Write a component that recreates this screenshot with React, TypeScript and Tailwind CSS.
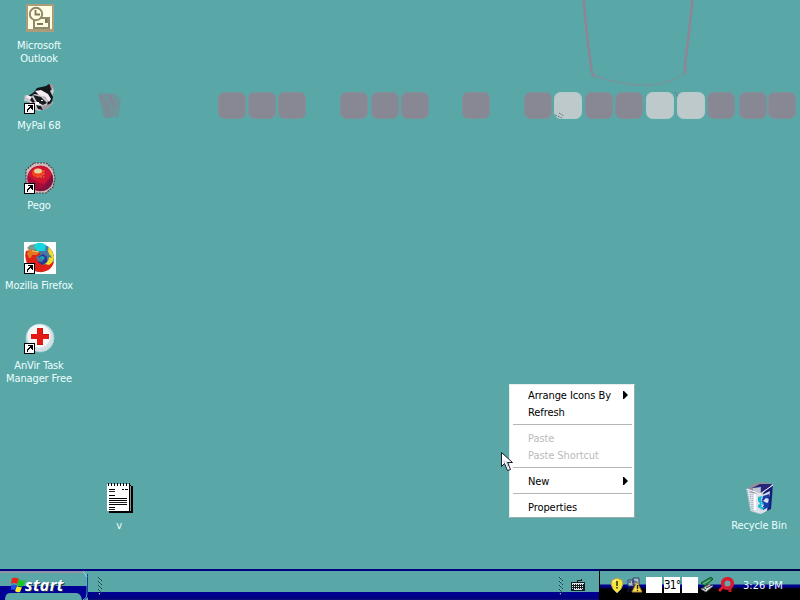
import React from 'react';

const label = 'font-["DejaVu_Sans_Condensed","DejaVu_Sans",sans-serif] font-[stretch:condensed]';

function Shortcut() {
  return (
    <g shapeRendering="crispEdges">
      <path fill="#fff" stroke="#000" d="M.5 21.5h10v10H.5z" />
      <path fill="#000" d="M4 23h5v5H8v-1H7v-1H6v1H5v1H4v2H3v-3h1v-1h1v-1h1v-1H4z" />
    </g>
  );
}

function Outlook() {
  return (
    <svg width="32" height="32" viewBox="0 2 32 32">
      <path fill="#a69d7b" d="M2 4h28v28H2z" />
      <path d="M2.5 4.5h27v27h-27z" fill="none" stroke="#c09a78" strokeDasharray="1 1" />
      <path fill="#fffde3" d="M4 6h24v23H4z" />
      <path d="M10 18h15v10H10z" fill="#fffde3" stroke="#918868" strokeWidth="2" />
      <circle cx="12" cy="14" r="6.2" fill="#fffde3" stroke="#918868" strokeWidth="2" />
      <path d="M11.5 10v4.5H16M13 24h6M21 20h2v2h-2" fill="none" stroke="#817757" strokeWidth="1.8" />
    </svg>
  );
}

function Raccoon() {
  return (
    <svg width="32" height="32" viewBox="0 0 32 32">
      <path fill="#c8c4c8" d="M1 13l7 2 3-7 12-3 2-3 3 1 2 6-2 5 1 7-5 5-9 3-6-2-4-7-5-1z" />
      <path fill="#11171b" d="M9 11l4-5 9-2 3-2 3 2v3l-2 2 3 6-1 6-5 3 1-6-6-5-8-1-4 4-2-2z" />
      <path fill="#f4ecf0" d="M11 9l6-1 7 4 3 5-2 3-4-5-6-2zM3 13l6 2 2 5 6 2-2 4-6-3-2-5-5-3z" />
      <path fill="#171b20" d="M9 13l8 2 6 6-4 2-6-3zM8 15l3 5-2 1-3-3zM12 23l5 1 2 4-5-1z" />
      <path fill="#c88898" d="M26 3l2-1 1 4-2 1z" />
      <path fill="#a098a0" d="M18 24l8-2 3-4-3 7-7 3z" />
      <path fill="#fff" d="M17 18h2v1h-2zM12 20h3v2h-3z" />
      <Shortcut />
    </svg>
  );
}

function Pego() {
  return (
    <svg width="32" height="32" viewBox="0 0 32 32">
      <path d="M10 1h12l7 6 2 9-2 9-7 6H9L2 24V8z" fill="#cfbdba" stroke="#54404c" strokeWidth="1.2" strokeDasharray="2 1" />
      <circle cx="16" cy="16.5" r="12.8" fill="#a80e3c" />
      <path fill="#cf1733" d="M4 13q5-11 16-9 7 2 7 10l-7 8q-9-1-16-9" />
      <path fill="#80133e" d="M28 12q4 9-4 15-6 4-13 0 11 1 17-15" />
      <ellipse cx="14" cy="11" rx="6" ry="4.5" fill="#f0451f" />
      <ellipse cx="14" cy="9" rx="4" ry="2.5" fill="#e8d49a" />
      <path d="M20 8v7h-7" fill="none" stroke="#d87645" strokeDasharray="2 1" />
      <Shortcut />
    </svg>
  );
}

function Firefox() {
  return (
    <svg width="32" height="32" viewBox="0 0 32 32">
      <path fill="#fff" d="M0 0h32v32H0z" />
      <circle cx="16" cy="16" r="14" fill="#4877a1" />
      <path fill="#7d9688" d="M3 6l3-3 5-1 1 5-4 3z" />
      <path fill="#13d7e0" d="M11 2q6-3 11 1l-1 6-8 0-3-4z" />
      <path fill="#df2118" d="M2 9l4-1 4 1 6 2 0 2-4 2 2 5 6 3 6-3 4 0q-2 7-8 9-8 3-14-2Q-1 18 2 9" />
      <path fill="#df7a22" d="M5 7l7 2 3 1-2 3-5 0-1 3-2 0-2-4z" />
      <path fill="#f0df25" d="M24 5q5 3 6 11-1 5-5 7l-4-1q4-3 4-7l3 1-3-5z" />
      <path fill="#2b3592" d="M14 15l5-3 4 3v5l-5 3-5-4 5 1 2-3z" />
      <path fill="#12a8bd" d="M15 15l4-1 2 2-2 2z" />
      <path d="M8 9l7 1M24 8l2 5" stroke="#f5ca55" fill="none" />
      <Shortcut />
    </svg>
  );
}

function AnVir() {
  return (
    <svg width="32" height="32" viewBox="0 0 32 32">
      <circle cx="16" cy="16" r="14" fill="#d3dfe4" stroke="#9ad4d7" strokeDasharray="2 1" />
      <circle cx="15" cy="14" r="11.5" fill="#f5f7f7" />
      <path fill="#e51813" d="M13 6h6v6h6v5h-6v6h-6v-6H7v-5h6z" />
      <path fill="#ba1612" d="M18 6h1v6h6v1h-7zM13 22h6v1h-6z" />
      <Shortcut />
    </svg>
  );
}

function Notepad() {
  return (
    <svg width="32" height="36" viewBox="1 -1 32 36" shapeRendering="crispEdges">
      <path fill="#000" d="M4 4h24v1h2v27H6v-2H4z" />
      <path fill="#fff" d="M4 3h22v27H4z" />
      <path fill="#8b9494" d="M27 5h1v25h-1z" />
      <path d="M5 3h22" stroke="#000" strokeWidth="3" strokeDasharray="1 2" />
      <path d="M6 8.5h6M19 8.5h2M22 8.5h3M6 14.5h6M6 17.5h18M6 19.5h18M6 23.5h18M6 26.5h6" stroke="#000" />
      <path d="M6 10.5h6M6 21.5h18M6 28.5h6" stroke="#222" />
    </svg>
  );
}

function RecycleBin() {
  return (
    <svg width="32" height="32" viewBox="0 0 32 32">
      <path fill="#dfe1eb" d="M3 7l13 5 13-9-3 24-9 5-10-3z" />
      <path fill="#90909a" d="M3 7l6-5 9-2 11 2-1 3-11 7-9-1z" />
      <path fill="#26267a" d="M8 6l8-4h12l-4 5-7 4V7l-5-1z" />
      <path fill="#141e79" d="M29 3l-2 24-4 2 3-20-8 4 2-3z" />
      <path fill="#c1c6d3" d="M9 6l8-1-1 6-7-2z" />
      <path fill="#173daa" d="M19 14l6-2 0 5-3-1-3 3 4 2-2 3-4-4zM23 21l3-2-1 6-6 3v-4z" />
      <path fill="#12b8d1" d="M14 15l4-1-1 4 3 4-3 1-3-4zM14 23l4-2v4l3 0-3 3-4-3z" />
      <path d="M2.5 7l4 22 10 3 2-20z" fill="none" stroke="#c8ccda" strokeDasharray="1 1" />
      <path d="M3 7l13 5 13-9" fill="none" stroke="#f9f9fb" />
      <path d="M6 10l2 18M8 10l1 19" stroke="#a9aac0" strokeDasharray="1 1" />
      <path d="M11 12v16" stroke="#fff" strokeWidth="2" />
    </svg>
  );
}

const leftIcons = [
  { art: <Outlook />, lines: [['Microsoft', 'w-[44px]'], ['Outlook', 'w-[38px]']] },
  { art: <Raccoon />, lines: [['MyPal 68', 'w-[44px]']] },
  { art: <Pego />, lines: [['Pego', 'w-[25px]']] },
  { art: <Firefox />, lines: [['Mozilla Firefox', 'w-[69px]']] },
  { art: <AnVir />, lines: [['AnVir Task', 'w-[51px]'], ['Manager Free', 'w-[68px]']] },
];

function IconLabel({ lines }: { lines: string[][] }) {
  return (
    <div className="flex w-full flex-col items-center pr-[2px] text-[11px] leading-[13px] text-[#edffff]">
      {lines.map(([text, width]) => (
        <span key={text} className={`${width} flex justify-center whitespace-nowrap tracking-[-0.13px]`}>{text}</span>
      ))}
    </div>
  );
}

function Wallpaper() {
  const blocks = [218, 248, 278, 340, 371, 401, 462, 524, 554, 585, 615, 646, 677, 707, 739, 768];
  return (
    <svg className="absolute inset-0" width="800" height="569" viewBox="0 0 800 569">
      <path d="M583.5 0l4 39 4 31M692.5 0l-4 37-4 31" fill="none" stroke="#8c8796" strokeWidth="2.6" />
      <path d="M591 70l3 7M686 66l-2 9" stroke="#8c8796" strokeWidth="2.5" />
      <path d="M595 76q27 9 49 9 21 0 36-9" fill="none" stroke="#7e919c" strokeWidth="1.5" strokeDasharray="10 2" />
      <path d="M98 93l17 1 6 6-3 17-14 1-3-12z" fill="#7b8c94" opacity=".7" />
      <path d="M100 96l6 9 3 12M109 94l5 13" stroke="#8e8193" strokeWidth="3" fill="none" opacity=".6" />
      {blocks.map((x) => {
        const light = x === 554 || x === 646 || x === 677;
        return <rect key={x} x={x + .5} y="92.5" width="27" height="26" rx="6" fill={light ? '#bdc9cb' : '#888894'} stroke={light ? '#b4cbcb' : '#83909a'} />;
      })}
      <path d="M555 115l7 3M559 113l5 3M675 92l3 5" stroke="#5b777d" strokeDasharray="2 1" />
    </svg>
  );
}

function MenuRow({ text, muted = false, arrow = false }: { text: string; muted?: boolean; arrow?: boolean }) {
  return (
    <div className={`flex h-[17px] items-center justify-between pr-[4px] pl-[16px] ${muted ? 'text-[#bbb]' : 'text-black'}`}>
      <span>{text}</span>
      {arrow && <svg className="-mt-px" width="5" height="8" viewBox="0 0 5 8"><path d="M0 0v8h1l4-4-4-4z" /></svg>}
    </div>
  );
}

function MenuDivider() {
  return <div className="mt-[3px] mb-[5px] ml-px h-px bg-[#b5b5b5]" />;
}

function ContextMenu() {
  return (
    <div className="absolute top-[384px] left-[509px] flex h-[134px] w-[126px] flex-col border border-[#e6eeee] border-r-[#94adad] border-b-[#94adad] bg-white px-[2px] pt-[2px] text-[11px] leading-[17px] tracking-[-0.08px]">
      <MenuRow text="Arrange Icons By" arrow />
      <MenuRow text="Refresh" />
      <MenuDivider />
      <MenuRow text="Paste" muted />
      <MenuRow text="Paste Shortcut" muted />
      <MenuDivider />
      <MenuRow text="New" arrow />
      <MenuDivider />
      <MenuRow text="Properties" />
    </div>
  );
}

function Grip() {
  return (
    <svg width="8" height="20" viewBox="0 0 8 20" shapeRendering="crispEdges">
      <path d="M2 1h1v1H2zM3 2h1v1H3zM5 4h1v1H5zM2 5h1v1H2zM3 6h1v1H3zM5 8h1v1H5zM2 9h1v1H2zM3 10h1v1H3zM5 12h1v1H5zM2 13h1v1H2zM3 14h1v1H3zM5 16h1v1H5zM2 17h1v1H2z" fill="#173e43" />
      <path d="M4 3h1v1H4zM4 7h1v1H4zM4 11h1v1H4zM4 15h1v1H4zM3 18h1v1H3z" fill="#356b70" />
      <path d="M3 1h1v1H3zM3 5h1v1H3zM3 9h1v1H3zM3 13h1v1H3zM3 17h1v1H3z" fill="#8ac4c3" />
    </svg>
  );
}

function Start() {
  return (
    <div className="relative h-full w-[88px] overflow-hidden">
      <svg className="absolute inset-0" width="88" height="31" viewBox="0 0 88 31">
        <path fill="#59a7a7" d="M0 0h88v31H0z" />
        <path fill="#000080" d="M0 0h88v2H0z" />
        <path fill="#9296a4" d="M0 2h83v2H0z" />
        <path fill="#000096" d="M0 17h88v11l-4 3H0z" />
        <path fill="#59a7a7" d="M5 31q0-7 5-7h66q5 0 6 7z" />
        <path d="M83 2q4 1 4 5v18q0 4-4 6" fill="none" stroke="#69adb5" />
        <path d="M87 5h1v21h-1" fill="#08449e" />
        <path d="M83 3l2 2 2 3" fill="none" stroke="#a6d4d4" />
      </svg>
      <div className="relative flex pt-[8px] pl-[11px]">
        <svg width="15" height="16" viewBox="0 0 15 16">
          <path fill="#e62518" d="M1 1q4-1 7 1L6 7Q3 5 0 7z" />
          <path fill="#18c624" d="M8 2q3 3 7 1l-3 6q-3 2-6-1z" />
          <path fill="#2051e4" d="M0 8q3-1 6 0l-2 5q-2-1-5 0z" />
          <path fill="#ffee24" d="M6 9q3 2 5 1l-2 5q-3 1-5-1z" />
        </svg>
        <span className="-mt-[1px] -ml-px font-['Open_Sans',sans-serif] text-[16px] leading-[19px] font-bold tracking-[0.35px] text-white italic [text-shadow:1px_1px_#18354e]">start</span>
      </div>
    </div>
  );
}

function Tray() {
  return (
    <div className="flex h-full w-[201px] border-t-2 border-l border-t-[#00004c] border-l-black bg-[#59a7a7]">
      <div className="flex h-full w-full items-start bg-[linear-gradient(to_bottom,transparent_0,transparent_13px,#000096_14px,#000080_16px,#000_18px)] pt-[6px] pl-[9px]">
        <svg width="16" height="17" viewBox="0 0 16 17">
          <path fill="#f8e53c" stroke="#a8a060" d="M8 1l5 2 1 4-2 5-4 4-4-4-2-5 1-4z" />
          <path d="M8 4v5M8 10v1.5" stroke="#323819" strokeWidth="1.6" />
          <path d="M4 5l3-2" stroke="#fffed4" />
        </svg>
        <svg className="ml-[1px]" width="18" height="17" viewBox="0 0 18 17">
          <path fill="#a9bfd0" stroke="#343c63" d="M2 3h6v6H2zM7 1h6v7H7z" />
          <path d="M2 12h9M1 14h9M3 10h7M3 5h9" stroke="#20205d" strokeDasharray="2 1" />
          <path fill="#fce04a" stroke="#b18931" d="M11 5l5 10H6z" />
          <path d="M11.5 8v4M11.5 13v1" stroke="#22240e" strokeWidth="1.4" />
        </svg>
        <div className="ml-[2px] h-[16px] w-[16px] bg-white" />
        <div className="ml-[2px] flex h-[16px] w-[16px] items-center justify-center bg-white text-[12px] tracking-[-0.8px] text-black">31°</div>
        <div className="ml-[2px] h-[16px] w-[16px] bg-white" />
        <svg className="ml-[1px]" width="17" height="17" viewBox="0 0 17 17">
          <path fill="#dce6db" stroke="#686f6d" d="M2 12l9-5 3 2-7 6z" />
          <path fill="#248c4b" stroke="#15542b" d="M2 6l10-6 2 2-8 7z" />
          <path d="M7 11l6-3M3 10l4 3" stroke="#151c1c" />
          <path d="M4 7l7-4" stroke="#84c09b" />
        </svg>
        <svg className="ml-[2px]" width="16" height="17" viewBox="0 0 16 17">
          <circle cx="9.5" cy="6.5" r="4.8" fill="#65a7ad" stroke="#dc1930" strokeWidth="3.5" />
          <path d="M6 9l-5 5" stroke="#dc1930" strokeWidth="3" />
          <path d="M12 10v5" stroke="#c21c32" strokeWidth="3" />
        </svg>
        <span className="ml-[9px] whitespace-nowrap text-[11px] leading-[17px] tracking-[0px] text-[#f0ffff]">3:26 PM</span>
      </div>
    </div>
  );
}

function Taskbar() {
  return (
    <div className="flex h-[31px] w-full">
      <Start />
      <div className="flex h-full w-[511px] items-start justify-between bg-[linear-gradient(to_bottom,#000080_0,#000080_2px,#59a7a7_2px,#59a7a7_23px,#000096_23px,#000080_29px,#10107c_31px)] pt-[7px] pr-[14px] pl-[8px]">
        <Grip />
        <div className="flex">
          <Grip />
          <svg className="mt-[2px] ml-[6px]" width="14" height="14" viewBox="0 0 14 14" shapeRendering="crispEdges">
            <path d="M6.5 4V2.5H10V1" fill="none" stroke="#161b20" />
            <path d="M0 4h14v9H0z" fill="#161b20" />
            <path d="M1 6.5h12M1 8.5h12M1 10.5h12" stroke="#ecf8f6" strokeDasharray="1 1" />
            <path d="M3 11.5h8M1 5.5h12" stroke="#dfe8e8" />
          </svg>
        </div>
      </div>
      <Tray />
    </div>
  );
}

export default function App() {
  return (
    <div className={`${label} flex h-[600px] w-[800px] flex-col overflow-hidden`}>
      <main className="relative h-[569px] w-full bg-[#59a7a7]">
        <Wallpaper />
        <div className="relative flex w-[80px] flex-col">
          {leftIcons.map((icon, index) => (
            <div key={index} className="flex h-[80px] flex-col items-center gap-[5px] pt-[2px]">
              {icon.art}
              <IconLabel lines={icon.lines} />
            </div>
          ))}
        </div>
        <div className="absolute top-[480px] left-[80px] flex w-[80px] flex-col items-center gap-[3px]">
          <Notepad />
          <IconLabel lines={[['v', 'w-[7px]']]} />
        </div>
        <div className="absolute top-[482px] left-[720px] flex w-[80px] flex-col items-center gap-[5px]">
          <RecycleBin />
          <IconLabel lines={[['Recycle Bin', 'w-[55px]']]} />
        </div>
        <ContextMenu />
        <svg className="absolute top-[452px] left-[501px]" width="13" height="20" viewBox="0 0 13 20">
          <path d="M.5.5v14l3-3 3 7 3-1-3-7h5z" fill="#fff" stroke="#151b2b" />
          <path d="M3 8v3l2-2 2 6" stroke="#cbcbe0" fill="none" />
        </svg>
      </main>
      <Taskbar />
    </div>
  );
}
